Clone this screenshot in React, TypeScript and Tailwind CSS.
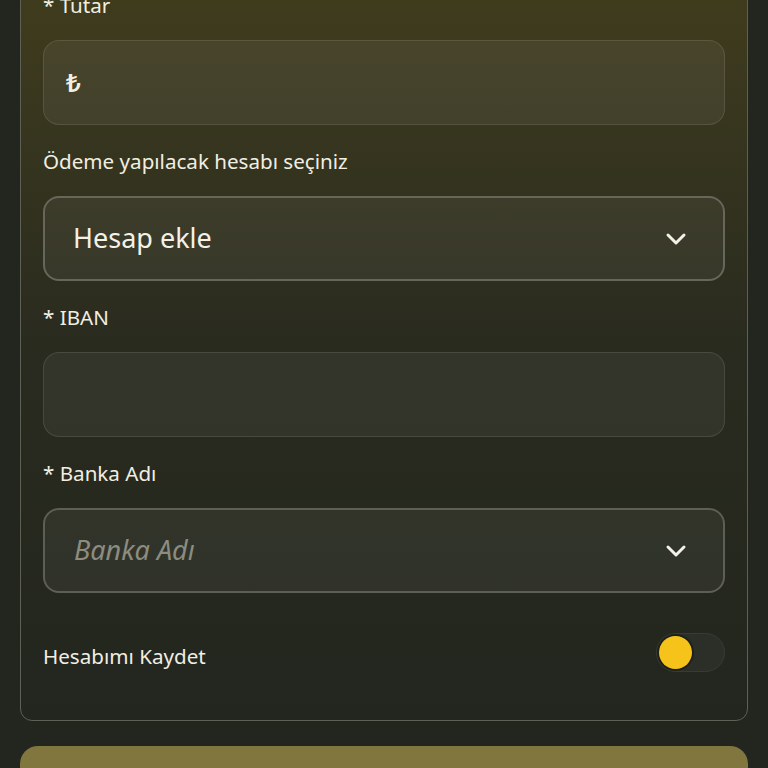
import React, { useState } from 'react';

function Chevron() {
    return (
        <svg width="22" height="14" viewBox="0 0 22 14" fill="none" className="shrink-0">
            <path d="M3 3l8 8 8-8" stroke="#f4f1e6" strokeWidth="3" strokeLinecap="round" strokeLinejoin="round" />
        </svg>
    );
}

function Field({ label, children }: { label: string; children: React.ReactNode }) {
    return (
        <div className="flex flex-col gap-[21px]">
            <div className="h-[30px] leading-[33px] text-[20.6px] text-[#f1eee2]">{label}</div>
            {children}
        </div>
    );
}

export default function App() {
    const [saveAccount, setSaveAccount] = useState(false);

    return (
        <div
            className="w-[768px] h-[768px] overflow-hidden bg-[#22261f] px-[20px]"
            style={{ fontFamily: '"Noto Sans", "Open Sans", sans-serif' }}
        >
            <div className="-mt-[34px] rounded-[12px] border border-[#5e5f55] bg-gradient-to-b from-[#413d1d] via-[#2a2b1f] to-[#22261e] px-[22px] pt-[22px] pb-[48px]">
                <div className="flex flex-col gap-[20px]">
                    <Field label="* Tutar">
                        <div className="h-[85px] rounded-[16px] border border-white/10 bg-white/[0.06] flex items-center px-[22px]">
                            <span className="text-[26px] font-semibold text-[#f1eee2]">₺</span>
                        </div>
                    </Field>
                    <Field label="Ödeme yapılacak hesabı seçiniz">
                        <div className="h-[85px] rounded-[16px] border-2 border-[#66665a] bg-white/[0.05] flex items-center justify-between pl-[28px] pr-[36px]">
                            <span className="text-[27px] text-[#f4f1e6]">Hesap ekle</span>
                            <Chevron />
                        </div>
                    </Field>
                    <Field label="* IBAN">
                        <div className="h-[85px] rounded-[16px] border border-white/10 bg-white/[0.05]" />
                    </Field>
                    <Field label="* Banka Adı">
                        <div className="h-[85px] rounded-[16px] border-2 border-[#5d5f56] bg-white/[0.05] flex items-center justify-between pl-[29px] pr-[36px]">
                            <span className="text-[27px] italic text-[#8c8c80]">Banka Adı</span>
                            <Chevron />
                        </div>
                    </Field>
                </div>
                <div className="mt-[40px] flex items-center justify-between">
                    <span className="mt-[8px] text-[20.6px] text-[#f1eee2]">Hesabımı Kaydet</span>
                    <button
                        onClick={() => setSaveAccount(!saveAccount)}
                        className={`relative h-[39px] w-[69px] rounded-full border border-[#383b33] bg-[#2c2f28] flex items-center px-[2px] ${saveAccount ? 'justify-end' : 'justify-start'}`}
                    >
                        <span className="h-[33px] w-[33px] rounded-full bg-[#f6c31b] ring-2 ring-[#1e211b]" />
                    </button>
                </div>
            </div>
            <div className="mt-[25px] h-[60px] rounded-[18px] bg-[#82763f]" />
        </div>
    );
}
